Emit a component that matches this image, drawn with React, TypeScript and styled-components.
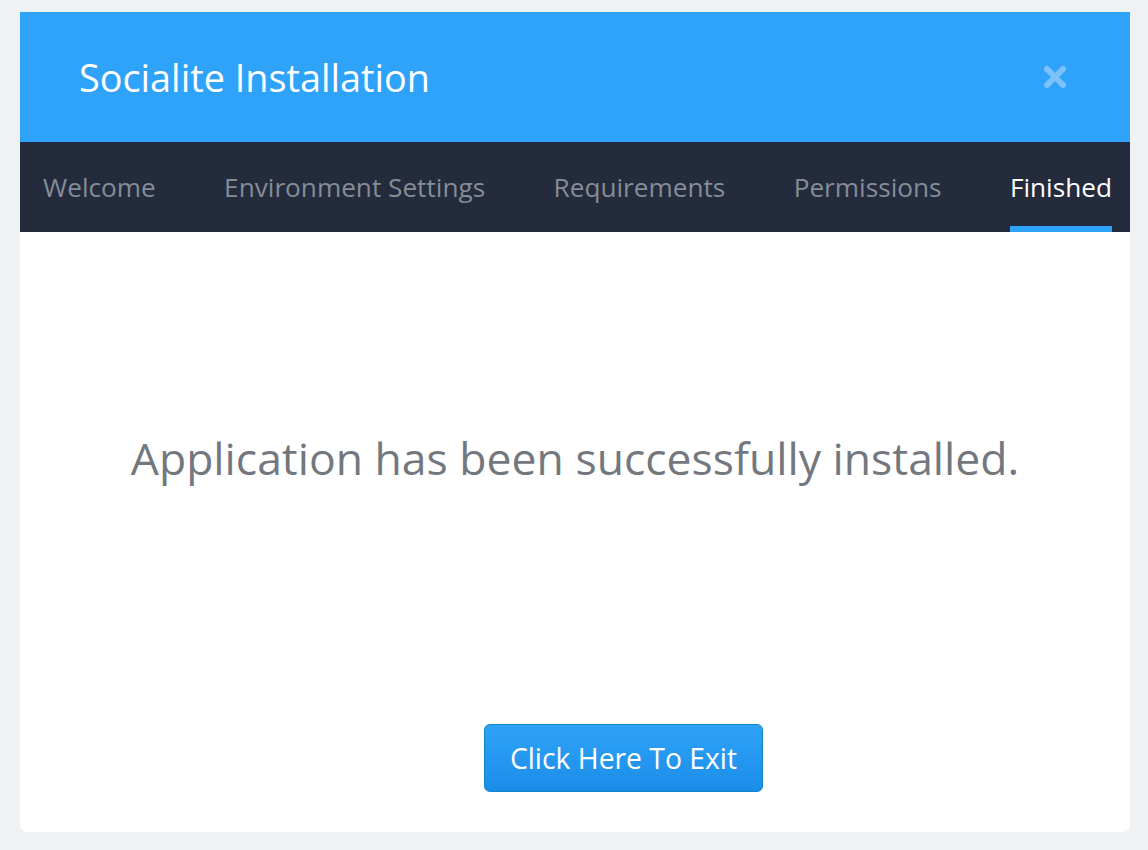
import React from "react";
import styled, { createGlobalStyle } from "styled-components";

const Global = createGlobalStyle`
  html, body { margin: 0; padding: 0; background: #eef2f5; }
  body { font-family: "Open Sans", "Noto Sans", sans-serif; }
`;

const Page = styled.div`
  padding: 12px 18px 18px 20px;
  min-height: 850px;
  box-sizing: border-box;
`;

const Card = styled.div`
  width: 1110px;
  background: #ffffff;
  border-radius: 0 0 7px 7px;
  overflow: hidden;
`;

const Header = styled.header`
  height: 130px;
  background: #2fa2f9;
  display: flex;
  align-items: center;
  justify-content: space-between;
  padding: 0 62px 0 59px;
`;

const Title = styled.h1`
  margin: 0;
  font-size: 37.8px;
  font-weight: 400;
  color: #ffffff;
`;

const CloseButton = styled.button`
  background: none;
  border: 0;
  padding: 0;
  width: 26px;
  height: 26px;
  display: flex;
  cursor: pointer;
`;

const Nav = styled.nav`
  height: 90px;
  background: #232b3c;
  display: flex;
  align-items: stretch;
  justify-content: space-between;
  padding: 0 18px 0 23px;
`;

const NavItem = styled.div<{ $active?: boolean }>`
  display: flex;
  align-items: center;
  font-size: 26.2px;
  color: ${(p) => (p.$active ? "#ffffff" : "#858c97")};
  box-shadow: ${(p) => (p.$active ? "inset 0 -6px 0 #2fa2f9" : "none")};
`;

const Body = styled.main`
  height: 600px;
  display: flex;
  flex-direction: column;
  align-items: center;
`;

const Message = styled.p`
  margin: 199px 0 0;
  font-size: 44.5px;
  color: #73787f;
  line-height: 54px;
`;

const ExitButton = styled.button`
  margin: 239px 0 0 97px;
  width: 279px;
  height: 68px;
  border: 1px solid #0d87c5;
  border-radius: 6px;
  background: linear-gradient(#2fa2f7, #1b8de9);
  color: #ffffff;
  font-family: inherit;
  font-size: 28.3px;
  cursor: pointer;
`;

const tabs = ["Welcome", "Environment Settings", "Requirements", "Permissions", "Finished"];

export default function App() {
  return (
    <>
      <Global />
      <Page>
        <Card>
          <Header>
            <Title>Socialite Installation</Title>
            <CloseButton aria-label="Close">
              <svg width="26" height="26" viewBox="0 0 26 26">
                <path d="M5 5 L21 21 M21 5 L5 21" stroke="#7ec2fb" strokeWidth="6" strokeLinecap="round" />
              </svg>
            </CloseButton>
          </Header>
          <Nav>
            {tabs.map((t) => (
              <NavItem key={t} $active={t === "Finished"}>
                {t}
              </NavItem>
            ))}
          </Nav>
          <Body>
            <Message>Application has been successfully installed.</Message>
            <ExitButton>Click Here To Exit</ExitButton>
          </Body>
        </Card>
      </Page>
    </>
  );
}
